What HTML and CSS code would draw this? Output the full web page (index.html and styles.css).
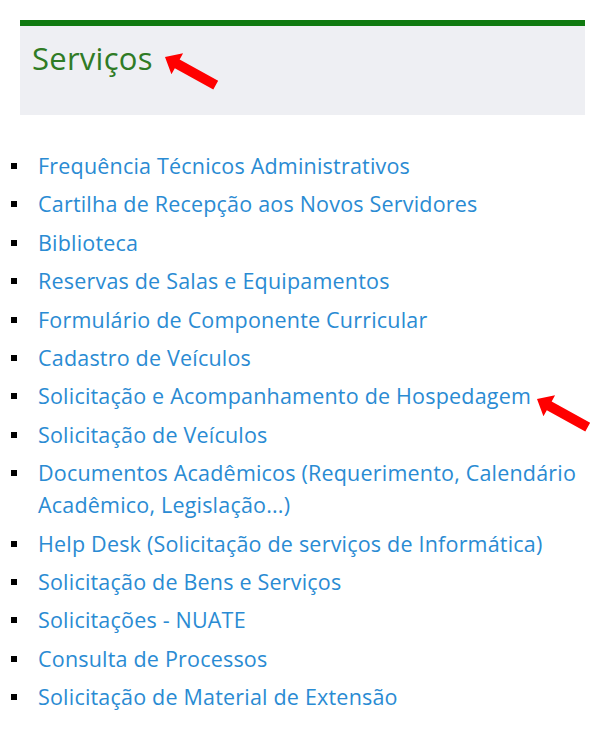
FILE: index.html
```html
<!DOCTYPE html>
<html lang="pt-BR">
  <head>
    <meta charset="UTF-8" />
    <meta name="viewport" content="width=device-width, initial-scale=1.0" />
    <title>Serviços</title>
    <link rel="stylesheet" href="styles.css">
  </head>
  <body>
    <div class="page">
      <section class="services-box">
        <h2 class="services-title">Serviços</h2>
      </section>

      <ul class="services-list">
        <li><a href="#">Frequência Técnicos Administrativos</a></li>
        <li><a href="#">Cartilha de Recepção aos Novos Servidores</a></li>
        <li><a href="#">Biblioteca</a></li>
        <li><a href="#">Reservas de Salas e Equipamentos</a></li>
        <li><a href="#">Formulário de Componente Curricular</a></li>
        <li><a href="#">Cadastro de Veículos</a></li>
        <li><a href="#">Solicitação e Acompanhamento de Hospedagem</a></li>
        <li><a href="#">Solicitação de Veículos</a></li>
        <li><a href="#">Documentos Acadêmicos (Requerimento, Calendário Acadêmico, Legislação...)</a></li>
        <li><a href="#">Help Desk (Solicitação de serviços de Informática)</a></li>
        <li><a href="#">Solicitação de Bens e Serviços</a></li>
        <li><a href="#">Solicitações - NUATE</a></li>
        <li><a href="#">Consulta de Processos</a></li>
        <li><a href="#">Solicitação de Material de Extensão</a></li>
      </ul>

      <!-- setas vermelhas de destaque (anotação sobre o print) -->
      <svg class="marks" width="613" height="744" viewBox="0 0 613 744">
        <polygon class="arrow" transform="translate(165 57) rotate(29)"
          points="0,0 14,-12 14,-5 58,-5 58,5 14,5 14,12" />
        <polygon class="arrow" transform="translate(537 399) rotate(29)"
          points="0,0 14,-12 14,-5 58,-5 58,5 14,5 14,12" />
      </svg>
    </div>
  </body>
</html>
```

FILE: styles.css
```css
:root {
  --green: #107a10;
  --title-green: #2f7b25;
  --box-bg: #eeeff3;
  --link: #2a8bd3;
}

* {
  padding: 0;
  margin: 0;
  box-sizing: border-box;
}

body {
  font-family: "Open Sans", "Noto Sans", sans-serif;
  background: #ffffff;
}

.page {
  position: relative;
  width: 613px;
  min-height: 744px;
  padding-top: 20px;
}

.services-box {
  margin-left: 20px;
  width: 565px;
  height: 95px;
  border-top: 6px solid var(--green);
  background: var(--box-bg);
  padding: 11px 12px 0;
}

.services-title {
  font-size: 31px;
  font-weight: 400;
  letter-spacing: 0.25px;
  color: var(--title-green);
}

.services-list {
  list-style: none;
  margin-top: 35px;
  padding-left: 11px;
}

.services-list li {
  display: flex;
  gap: 21px;
  font-size: 21.5px;
  letter-spacing: 0.2px;
  line-height: 32px;
  margin-bottom: 6.4px;
}

/* marcador quadrado */
.services-list li::before {
  content: "";
  flex: none;
  width: 6px;
  height: 6px;
  margin-top: 13px;
  background: #000000;
}

.services-list a {
  color: var(--link);
  text-decoration: none;
}

.marks {
  position: absolute;
  top: 0;
  left: 0;
  pointer-events: none;
}

.arrow {
  fill: #ff0000;
}
```
